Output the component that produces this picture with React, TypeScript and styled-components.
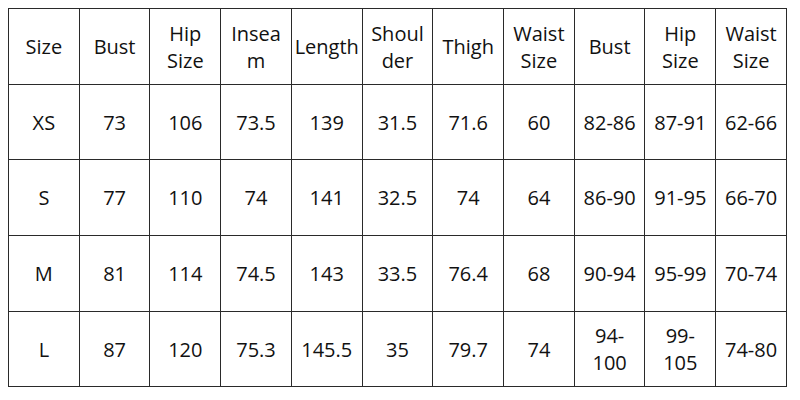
import { createGlobalStyle, styled } from 'styled-components'

const GlobalStyle = createGlobalStyle`
  body {
    margin: 8px;
    background: #ffffff;
    font-family: "Open Sans", "Noto Sans", sans-serif;
  }
`

const StyledTable = styled.table`
  width: 779px;
  table-layout: fixed;
  border-collapse: collapse;
  color: #111111;
  font-size: 20px;
  line-height: 27px;
`

const StyledRow = styled.tr<{ $height: number }>`
  height: ${props => props.$height}px;
`

const StyledCell = styled.td`
  border: 1px solid #2a2a2a;
  text-align: center;
  vertical-align: middle;
  white-space: pre-line;
  padding: 0;
`

const header = [
  'Size', 'Bust', 'Hip\nSize', 'Insea\nm', 'Length', 'Shoul\nder',
  'Thigh', 'Waist\nSize', 'Bust', 'Hip\nSize', 'Waist\nSize',
]

const rows = [
  ['XS', '73', '106', '73.5', '139', '31.5', '71.6', '60', '82-86', '87-91', '62-66'],
  ['S', '77', '110', '74', '141', '32.5', '74', '64', '86-90', '91-95', '66-70'],
  ['M', '81', '114', '74.5', '143', '33.5', '76.4', '68', '90-94', '95-99', '70-74'],
  ['L', '87', '120', '75.3', '145.5', '35', '79.7', '74', '94-\n100', '99-\n105', '74-80'],
]

const heights = [76, 75, 76, 76, 75]

const App = () => {
  return (
    <>
      <GlobalStyle />
      <StyledTable>
        <tbody>
          <StyledRow $height={heights[0]}>
            {header.map((label, i) => (
              <StyledCell key={i}>{label}</StyledCell>
            ))}
          </StyledRow>
          {rows.map((row, r) => (
            <StyledRow key={r} $height={heights[r + 1]}>
              {row.map((value, i) => (
                <StyledCell key={i}>{value}</StyledCell>
              ))}
            </StyledRow>
          ))}
        </tbody>
      </StyledTable>
    </>
  )
}

export default App
